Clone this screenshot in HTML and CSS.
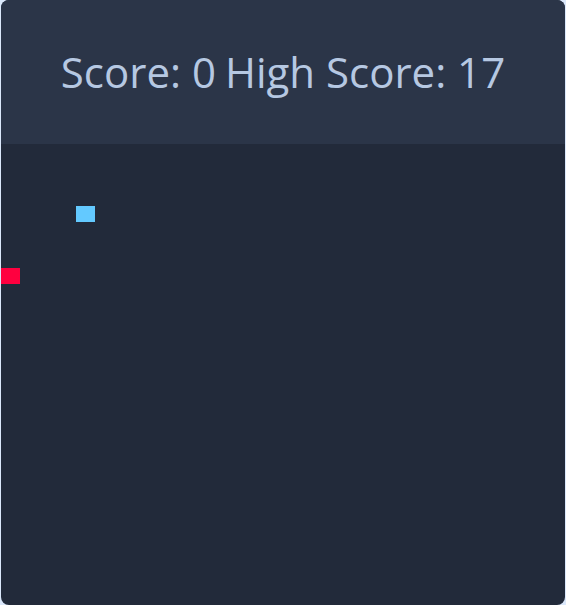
FILE: index.html
```html
<!DOCTYPE html>
<html lang="en">
<head>
<meta charset="utf-8">
<title>Snake</title>
<link rel="stylesheet" href="styles.css">
</head>
<body>
<div class="card">
  <header class="scoreboard">
    <span class="score">Score: 0</span>
    <span class="score">High Score: 17</span>
  </header>
  <div class="board">
    <div class="cell food" style="grid-column:5;grid-row:5"></div>
    <div class="cell snake" style="grid-column:1;grid-row:9"></div>
  </div>
</div>
</body>
</html>
```
FILE: styles.css
```css
html, body {
  margin: 0;
  padding: 0;
  background: #dbe8fb;
  height: 100%;
}
.card {
  margin: 0 1px;
  height: 605px;
  border-radius: 8px;
  overflow: hidden;
  display: flex;
  flex-direction: column;
  background: #222a3a;
}
.scoreboard {
  height: 144px;
  flex: none;
  background: #2b3548;
  display: flex;
  justify-content: center;
  align-items: center;
  gap: 9px;
  padding-bottom: 1px;
  box-sizing: border-box;
  font-family: "Open Sans", sans-serif;
  font-size: 42px;
  color: #b6c8e2;
}
.board {
  flex: 1;
  display: grid;
  grid-template-columns: repeat(30, 18.75px);
  grid-template-rows: repeat(30, 15.5px);
}
.food { background: #63c9ff; }
.snake { background: #ff003f; }
```
